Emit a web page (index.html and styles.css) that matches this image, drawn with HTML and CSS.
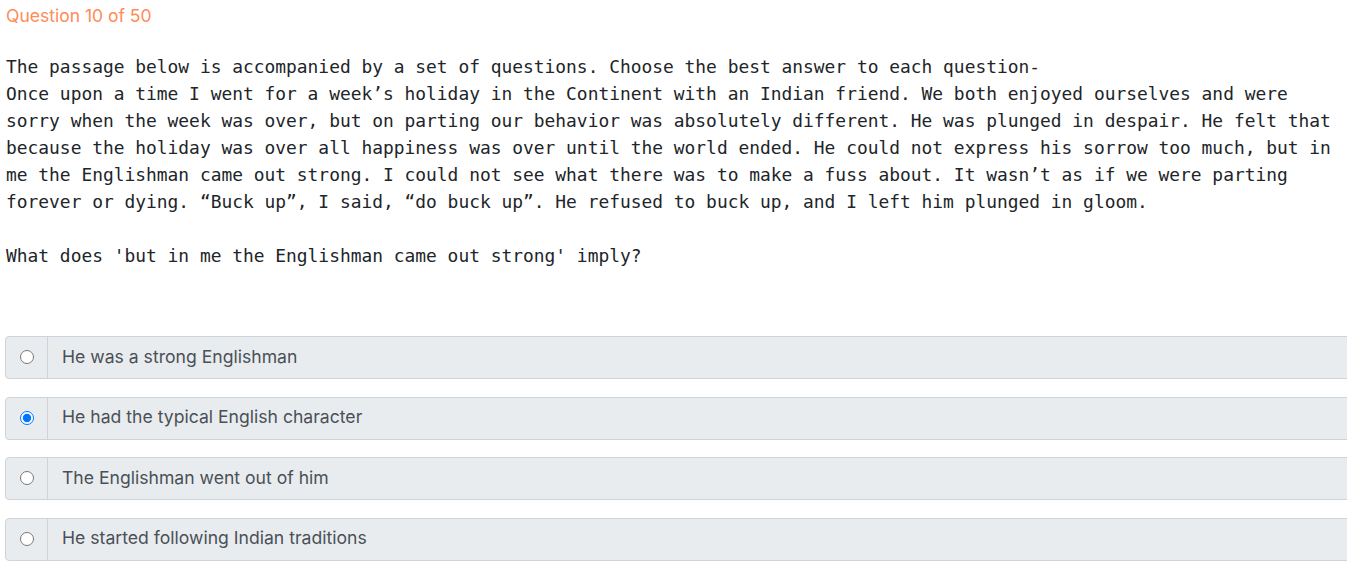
FILE: index.html
```html
<!DOCTYPE html>
<html>
<head>
<meta charset="utf-8">
<link rel="stylesheet" href="styles.css">
</head>
<body>
<div class="page">
  <div class="qnum">Question 10 of 50</div>
  <div class="passage">The passage below is accompanied by a set of questions. Choose the best answer to each question-
Once upon a time I went for a week’s holiday in the Continent with an Indian friend. We both enjoyed ourselves and were
sorry when the week was over, but on parting our behavior was absolutely different. He was plunged in despair. He felt that
because the holiday was over all happiness was over until the world ended. He could not express his sorrow too much, but in
me the Englishman came out strong. I could not see what there was to make a fuss about. It wasn’t as if we were parting
forever or dying. “Buck up”, I said, “do buck up”. He refused to buck up, and I left him plunged in gloom.

What does 'but in me the Englishman came out strong' imply?</div>
  <div class="options">
    <label class="opt"><span class="radio-cell"><input type="radio" name="q"></span><span class="opt-text">He was a strong Englishman</span></label>
    <label class="opt"><span class="radio-cell"><input type="radio" name="q" checked></span><span class="opt-text">He had the typical English character</span></label>
    <label class="opt"><span class="radio-cell"><input type="radio" name="q"></span><span class="opt-text">The Englishman went out of him</span></label>
    <label class="opt"><span class="radio-cell"><input type="radio" name="q"></span><span class="opt-text">He started following Indian traditions</span></label>
  </div>
</div>
</body>
</html>
```
FILE: styles.css
```css
html, body {
  margin: 0;
  padding: 0;
  overflow: hidden;
  background: #fff;
}
.page {
  padding: 4px 0 0 5px;
  font-family: Inter, "Noto Sans", sans-serif;
}
.qnum {
  color: #ff8c57;
  font-size: 17.5px;
  line-height: 24px;
  padding-left: 1px;
}
.passage {
  margin-top: 25px;
  padding-left: 1px;
  white-space: pre;
  font-family: "DejaVu Sans Mono", monospace;
  font-size: 17.9px;
  line-height: 27px;
  color: #212529;
}
.options {
  margin-top: 67px;
  display: flex;
  flex-direction: column;
  gap: 17.6px;
  width: 1400px;
}
.opt {
  display: flex;
  align-items: stretch;
  height: 41px;
  background: #e9ecef;
  border: 1px solid #ced4da;
  border-radius: 4px;
  color: #495057;
  font-size: 17.6px;
}
.radio-cell {
  width: 41px;
  display: flex;
  align-items: center;
  justify-content: center;
  border-right: 1px solid #ced4da;
}
.radio-cell input {
  margin: 0 0 1px 0;
  width: 14px;
  height: 14px;
}
.opt-text {
  display: flex;
  align-items: center;
  padding-left: 14px;
  padding-bottom: 3px;
}
```
